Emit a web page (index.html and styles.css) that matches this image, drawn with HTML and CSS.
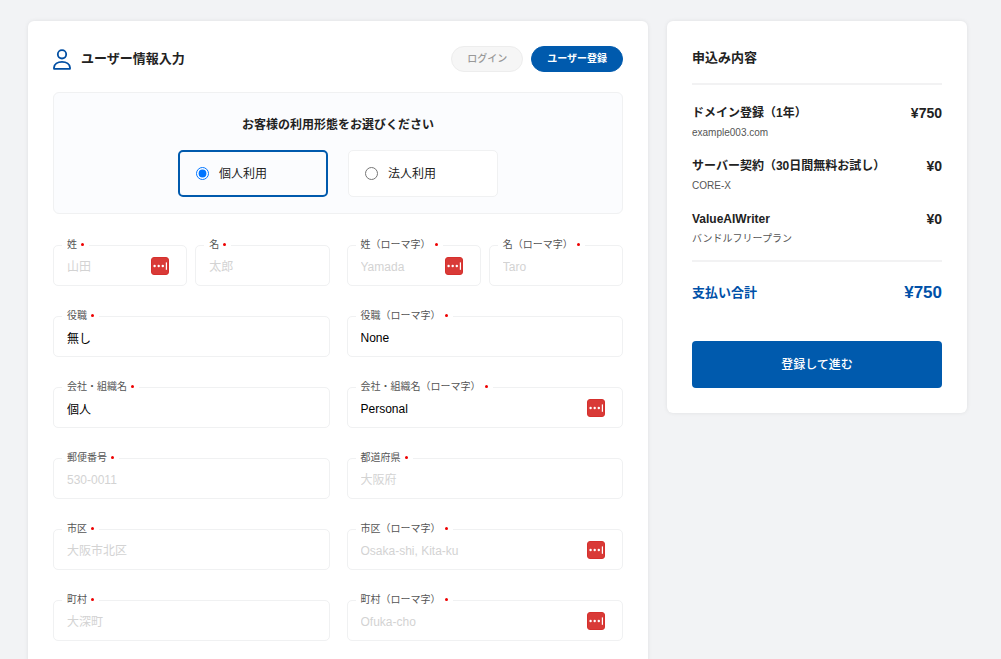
FILE: index.html
```html
<!DOCTYPE html>
<html lang="ja">
<head>
<meta charset="utf-8">
<meta name="viewport" content="width=device-width, initial-scale=1">
<title>ユーザー情報入力</title>
<link rel="stylesheet" href="styles.css">
</head>
<body>
<svg class="sprite" aria-hidden="true">
  <symbol id="filler" viewBox="0 0 18 18">
    <rect x="0.5" y="0.5" width="17" height="17" rx="2.5" fill="#d93a37" stroke="#d5302d"/>
    <circle cx="3.6" cy="9" r="1.2" fill="#fff"/>
    <circle cx="7.7" cy="9" r="1.2" fill="#fff"/>
    <circle cx="11.8" cy="9" r="1.2" fill="#fff"/>
    <rect x="14.8" y="5.4" width="1.2" height="7.4" fill="#fff"/>
  </symbol>
</svg>
<div class="page">
  <main class="card main">
    <header class="head">
      <h1 class="title">
        <svg class="user-icon" viewBox="0 0 18 21" aria-hidden="true">
          <circle cx="9" cy="5.3" r="4.2"/>
          <path d="M1 19.8V18.6C1.3 15.4 4.4 12.9 9 12.9S16.7 15.4 17 18.6V19.8Z"/>
        </svg>
        ユーザー情報入力
      </h1>
      <nav class="tabs">
        <button class="tab" type="button">ログイン</button>
        <button class="tab tab-active" type="button">ユーザー登録</button>
      </nav>
    </header>

    <form id="signup">
      <section class="usage" role="radiogroup" aria-labelledby="usage-title">
        <h2 class="usage-title" id="usage-title">お客様の利用形態をお選びください</h2>
        <div class="options">
          <label class="option"><input class="radio" type="radio" name="usage" checked>個人利用</label>
          <label class="option"><input class="radio" type="radio" name="usage">法人利用</label>
        </div>
      </section>

      <div class="fields">
        <div class="pair">
          <div class="field"><label class="label" for="sei">姓</label><input class="input" id="sei" type="text" placeholder="山田"><svg class="filler"><use href="#filler"/></svg></div>
          <div class="field"><label class="label" for="mei">名</label><input class="input" id="mei" type="text" placeholder="太郎"></div>
        </div>
        <div class="pair">
          <div class="field"><label class="label" for="sei-r">姓（ローマ字）</label><input class="input" id="sei-r" type="text" placeholder="Yamada"><svg class="filler"><use href="#filler"/></svg></div>
          <div class="field"><label class="label" for="mei-r">名（ローマ字）</label><input class="input" id="mei-r" type="text" placeholder="Taro"></div>
        </div>
        <div class="field"><label class="label" for="role">役職</label><input class="input" id="role" type="text" value="無し"></div>
        <div class="field"><label class="label" for="role-r">役職（ローマ字）</label><input class="input" id="role-r" type="text" value="None"></div>
        <div class="field"><label class="label" for="org">会社・組織名</label><input class="input" id="org" type="text" value="個人"></div>
        <div class="field"><label class="label" for="org-r">会社・組織名（ローマ字）</label><input class="input" id="org-r" type="text" value="Personal"><svg class="filler"><use href="#filler"/></svg></div>
        <div class="field"><label class="label" for="zip">郵便番号</label><input class="input" id="zip" type="text" placeholder="530-0011"></div>
        <div class="field"><label class="label" for="pref">都道府県</label><input class="input" id="pref" type="text" placeholder="大阪府"></div>
        <div class="field"><label class="label" for="city">市区</label><input class="input" id="city" type="text" placeholder="大阪市北区"></div>
        <div class="field"><label class="label" for="city-r">市区（ローマ字）</label><input class="input" id="city-r" type="text" placeholder="Osaka-shi, Kita-ku"><svg class="filler"><use href="#filler"/></svg></div>
        <div class="field"><label class="label" for="town">町村</label><input class="input" id="town" type="text" placeholder="大深町"></div>
        <div class="field"><label class="label" for="town-r">町村（ローマ字）</label><input class="input" id="town-r" type="text" placeholder="Ofuka-cho"><svg class="filler"><use href="#filler"/></svg></div>
      </div>
    </form>
  </main>

  <aside class="card summary">
    <h2 class="summary-title">申込み内容</h2>
    <ul class="items">
      <li class="item">
        <div class="item-row"><span class="item-name">ドメイン登録（1年）</span><span class="price">¥750</span></div>
        <div class="item-note">example003.com</div>
      </li>
      <li class="item">
        <div class="item-row"><span class="item-name">サーバー契約（30日間無料お試し）</span><span class="price">¥0</span></div>
        <div class="item-note">CORE-X</div>
      </li>
      <li class="item">
        <div class="item-row"><span class="item-name">ValueAIWriter</span><span class="price">¥0</span></div>
        <div class="item-note">バンドルフリープラン</div>
      </li>
    </ul>
    <div class="total"><span>支払い合計</span><span class="total-price">¥750</span></div>
    <button class="submit" type="submit" form="signup">登録して進む</button>
  </aside>
</div>
</body>
</html>
```
FILE: styles.css
```css
:root {
  --blue: #005aad;
  --line: #f0f1f2;
  --ink: #222;
}

* {
  box-sizing: border-box;
}

body {
  margin: 0;
  background: #f2f3f5;
  color: var(--ink);
  font-family: "Liberation Sans", "Noto Sans CJK JP", sans-serif;
  font-size: 12px;
  line-height: 20px;
}

h1,
h2,
ul {
  margin: 0;
  padding: 0;
}

button,
input {
  font-family: inherit;
}

.sprite {
  display: none;
}

.page {
  display: flex;
  align-items: flex-start;
  gap: 19px;
  padding: 21px 34px 30px 28px;
}

.card {
  padding: 25px;
  border-radius: 6px;
  background: #fff;
  box-shadow: 0 0 4px rgba(0, 0, 0, 0.08);
}

.main {
  flex: 1;
  min-width: 0;
}

.summary {
  width: 300px;
}

/* Header */
.head {
  display: flex;
  align-items: center;
  justify-content: space-between;
  margin-bottom: 20px;
}

.title {
  display: flex;
  align-items: center;
  gap: 10px;
  font-size: 13px;
  line-height: 28px;
  height: 26px;
}

.user-icon {
  width: 18px;
  height: 21px;
  fill: none;
  stroke: #004ea2;
  stroke-width: 1.8;
  stroke-linejoin: round;
}

.tabs {
  display: flex;
  gap: 8px;
}

.tab {
  padding: 0 15px;
  border: 1px solid #ededed;
  border-radius: 13px;
  background: #f6f6f6;
  color: #999;
  font-size: 10px;
  font-weight: 500;
  line-height: 24px;
}

.tab-active {
  border-color: var(--blue);
  background: var(--blue);
  color: #fff;
  font-weight: 700;
}

/* Usage type */
.usage {
  padding: 24px 16px 16px;
  border: 1px solid var(--line);
  border-radius: 6px;
  background: #fbfcfe;
}

.usage-title {
  margin-bottom: 17px;
  font-size: 12px;
  line-height: 16px;
  text-align: center;
}

.options {
  display: flex;
  justify-content: center;
  gap: 20px;
}

.option {
  display: flex;
  align-items: center;
  gap: 10px;
  width: 150px;
  height: 47px;
  padding: 0 16px;
  border: 1px solid var(--line);
  border-radius: 5px;
  background: #fff;
}

.option:has(:checked) {
  border: 2px solid var(--blue);
  background: #fbfcfe;
}

.radio {
  width: 13px;
  height: 13px;
  margin: 0;
}

/* Fields */
.fields {
  display: grid;
  grid-template-columns: 1fr 1fr;
  gap: 30px 17px;
  margin-top: 31px;
}

.pair {
  display: grid;
  grid-template-columns: 1fr 1fr;
  gap: 8px;
}

.field {
  position: relative;
  display: flex;
  align-items: center;
  min-width: 0;
  height: 41px;
  padding: 0 17px 0 13px;
  border: 1px solid var(--line);
  border-radius: 5px;
}

.label {
  position: absolute;
  top: -8px;
  left: 8px;
  display: flex;
  align-items: center;
  gap: 4px;
  padding: 0 5px;
  background: #fff;
  color: #555;
  font-size: 10px;
  line-height: 14px;
}

.label::after {
  width: 3px;
  height: 3px;
  margin-bottom: 1px;
  border-radius: 50%;
  background: #e00;
  content: "";
}

.input {
  flex: 1;
  width: 100%;
  min-width: 0;
  height: 39px;
  padding: 2px 0 0;
  border: 0;
  outline: 0;
  background: transparent;
  color: #000;
  font-size: 12px;
}

.input::placeholder {
  color: #d3d3d3;
}

.filler {
  flex: none;
  width: 18px;
  height: 18px;
}

/* Order summary */
.summary-title {
  padding-bottom: 13px;
  border-bottom: 2px solid #f2f2f3;
  font-size: 13px;
  line-height: 24px;
}

.items {
  display: grid;
  gap: 13px;
  padding: 18px 0 11px;
  border-bottom: 2px solid #f2f2f3;
  list-style: none;
}

.item-row,
.total {
  display: flex;
  align-items: center;
  justify-content: space-between;
  font-weight: 700;
  white-space: nowrap;
}

.price {
  font-size: 14px;
}

.item-note {
  color: #555;
  font-size: 10px;
}

.total {
  margin: 19px 0 36px;
  color: #0050a8;
  font-size: 13px;
  line-height: 24px;
}

.total-price {
  font-size: 17px;
}

.submit {
  width: 100%;
  height: 47px;
  padding: 0 0 2px;
  border: 0;
  border-radius: 4px;
  background: var(--blue);
  color: #fff;
  font-size: 12px;
  font-weight: 500;
}
```
